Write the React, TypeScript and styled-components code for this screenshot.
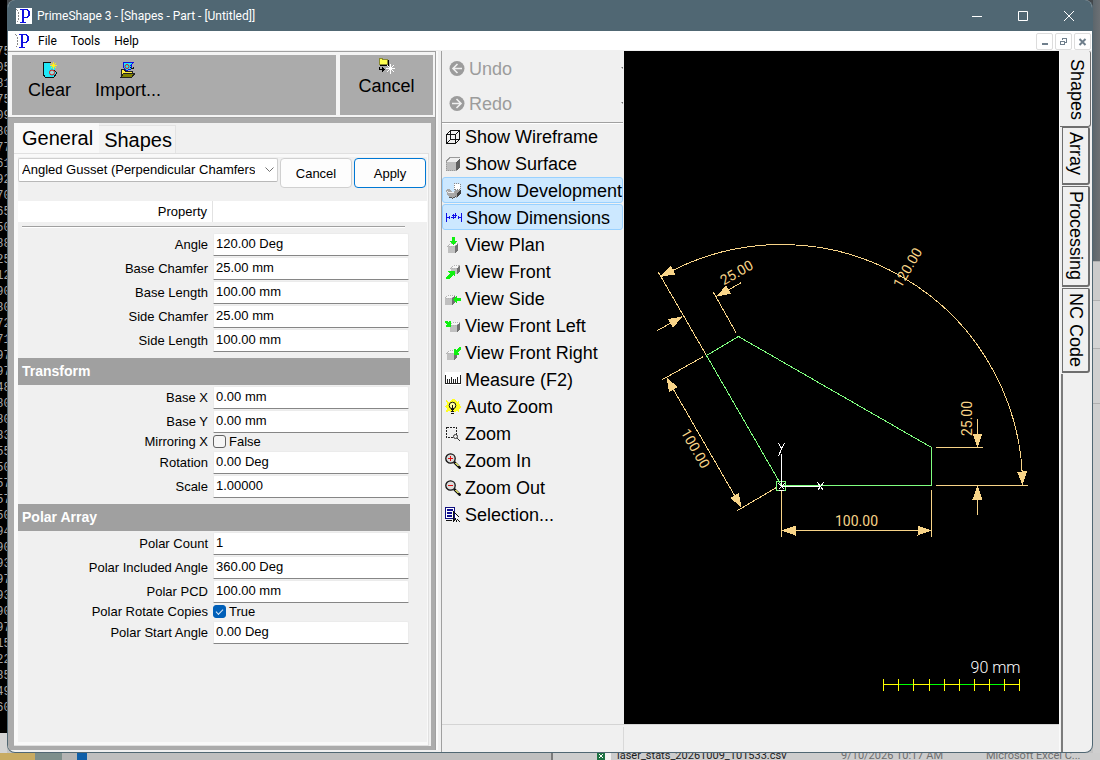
import React from "react";
import styled, { createGlobalStyle, css } from "styled-components";

const Global = createGlobalStyle`
  *, *::before, *::after { box-sizing: border-box; }
  html, body { margin: 0; padding: 0; }
  body { background: #c4c4c4; font-family: "Liberation Sans", Arial, sans-serif; color: #000; }
  button, input, select { font-family: inherit; margin: 0; }
`;

/* ---------- desktop behind the window ---------- */

const Desktop = styled.div`
  display: grid;
  grid-template-columns: 7px minmax(0, 1fr) 7px;
  grid-template-rows: minmax(0, 1fr) 7px;
  min-height: 100vh;
  background: linear-gradient(#43484c 0 60px, #c4c4c4 60px);
`;

const Terminal = styled.div`
  display: flex;
  flex-direction: column;
  align-items: center;
  overflow: hidden;
  padding: 44px 0 17px;
  background: #000;
  border-bottom: 20px solid #d4d4d4;
  color: #a4a4a4;
  font: 12px/16px "Liberation Mono", monospace;
`;

const TerminalLine = styled.span`
  flex: none;
`;

const RightEdge = styled.div`
  display: flex;
  flex-direction: column;
  background: #cfcfcf;
`;

const EdgeBlock = styled.div<{ $h: number; $bg: string }>`
  height: ${(p) => p.$h}px;
  background: ${(p) => p.$bg};
  border-bottom: 1px solid #b0b0b0;
`;

const BottomEdge = styled.div`
  grid-column: 1 / -1;
  display: grid;
  grid-template-columns: 35px 27px 15px 10px 464px 2px minmax(0, 1fr);
  overflow: hidden;
`;

const Swatch = styled.div<{ $bg: string }>`
  background: ${(p) => p.$bg};
`;

const FileRow = styled.div`
  display: grid;
  grid-template-columns: 20px 224px 145px minmax(0, 1fr);
  align-items: center;
  align-content: center;
  height: 7px;
  padding: 0 0 2px 44px;
  overflow: hidden;
  background: #cdcdcd;
  color: #6e6e6e;
  font: 11px/16px Roboto, "Noto Sans", sans-serif;
  white-space: nowrap;
`;

const FileName = styled.span`
  color: #1c1c1c;
`;

/* ---------- window frame ---------- */

const Frame = styled.div`
  display: flex;
  flex-direction: column;
  overflow: hidden;
  border: 1px solid #506773;
  border-top: 0;
  border-radius: 8px;
  background: #f0f0f0;
`;

const TitleBar = styled.header`
  display: flex;
  align-items: center;
  height: 31px;
  padding-left: 8px;
  gap: 5px;
  background: #506773;
  color: #fff;
  font: 12px/16px Roboto, "Noto Sans", sans-serif;
`;

const Title = styled.h1`
  flex: 1;
  margin: 0;
  font: inherit;
`;

const CaptionRow = styled.div`
  display: flex;
`;

const CaptionButton = styled.button`
  display: grid;
  place-items: center;
  width: 46px;
  height: 31px;
  padding: 0;
  border: 0;
  background: none;
  color: #fff;
`;

const MenuBar = styled.nav`
  display: flex;
  align-items: center;
  height: 20px;
  padding: 1px 1px 0 7px;
  background: #fff;
  border-bottom: 1px solid #f0f0f0;
`;

const MenuItem = styled.button`
  height: 18px;
  padding: 0 7px;
  border: 0;
  background: none;
  font: 12px/16px Roboto, "Noto Sans", sans-serif;
`;

const MdiButtons = styled.div`
  display: flex;
  gap: 2px;
  margin-left: auto;
`;

const MdiButton = styled.button`
  display: grid;
  place-items: center;
  width: 17px;
  height: 17px;
  padding: 0;
  border: 1px solid #dcdcdc;
  border-radius: 2px;
  background: #fff;
  color: #6f7f8c;
`;

const Body = styled.div`
  flex: 1;
  display: grid;
  grid-template-columns: 428px minmax(0, 1fr) 33px;
`;

/* ---------- left side: command bar and property pages ---------- */

const LeftPane = styled.section`
  display: flex;
  flex-direction: column;
  margin-bottom: 2px;
  border-top: 1px solid #a0a0a0;
  border-right: 1px solid #a0a0a0;
  background: #ababab;
  box-shadow: 2px 0 0 #fafafa;
`;

const CommandBar = styled.div`
  display: grid;
  grid-template-columns: minmax(0, 1fr) 93px;
  gap: 4px;
  height: 66px;
  padding: 3px 2px 2px 4px;
  background: #f4f4f4;
  border-bottom: 1px solid #a0a0a0;
`;

const CommandGroup = styled.div<{ $center?: boolean }>`
  display: flex;
  gap: 14px;
  align-items: flex-start;
  justify-content: ${(p) => (p.$center ? "center" : "flex-start")};
  padding: ${(p) => (p.$center ? "3px 0 0" : "7px 0 0 11px")};
  background: #ababab;
`;

const Command = styled.button`
  display: flex;
  flex-direction: column;
  align-items: center;
  gap: 2px;
  padding: 0 5px;
  border: 0;
  background: none;
  font-size: 18px;
  line-height: 20px;
`;

const Pages = styled.div`
  flex: 1;
  display: flex;
  flex-direction: column;
  margin: 5px 4px 4px 6px;
  background: #f0f0f0;
`;

const TabStrip = styled.div`
  display: flex;
  align-items: flex-end;
  height: 30px;
`;

const PageTab = styled.button<{ $active?: boolean }>`
  height: ${(p) => (p.$active ? 30 : 28)}px;
  padding: ${(p) => (p.$active ? "0 6px 0 8px" : "0 3px 0 5px")};
  border: 1px solid #e3e3e3;
  border-width: ${(p) => (p.$active ? "0" : "1px 1px 0 0")};
  background: ${(p) => (p.$active ? "#f9f9f9" : "#f3f3f3")};
  font-size: 20px;
  line-height: 24px;
`;

const Page = styled.div`
  flex: 1;
  display: flex;
  margin-right: 2px;
  padding: 3px 1px 3px 4px;
  border: 1px solid #e0e0e0;
  border-left: 0;
  background: #f9f9f9;
`;

const PageInner = styled.div`
  flex: 1;
  min-width: 0;
  background: #f0f0f0;
  font-size: 13px;
`;

const ShapeBar = styled.div`
  display: grid;
  grid-template-columns: minmax(0, 1fr) 72px 72px;
  gap: 2px;
  align-items: start;
  height: 44px;
  padding: 1px 1px 0 0;
`;

const SelectWrap = styled.div`
  position: relative;
  svg { position: absolute; right: 4px; top: 8px; pointer-events: none; }
`;

const ShapeSelect = styled.select`
  display: block;
  width: 100%;
  height: 24px;
  padding: 0 22px 2px 3px;
  appearance: none;
  border: 1px solid #cfcfcf;
  border-bottom-color: #b8b8b8;
  border-radius: 2px;
  background: #fff;
  color: #000;
  font-size: 13px;
`;

const PushButton = styled.button<{ $primary?: boolean }>`
  height: 30px;
  padding: 0;
  border: 1px solid ${(p) => (p.$primary ? "#0078d4" : "#d0d0d0")};
  border-radius: 4px;
  background: #fdfdfd;
  font-size: 13px;
`;

const ColumnHead = styled.div`
  display: grid;
  grid-template-columns: 195px minmax(0, 1fr);
  height: 21px;
  background: #fff;
  line-height: 21px;
  text-align: right;
`;

const ColumnName = styled.div`
  padding-right: 5px;
  border-right: 1px solid #e2e2e2;
`;

const Rule = styled.hr`
  height: 2px;
  margin: 4px 22px 4px 4px;
  border: 0;
  border-top: 1px solid #a0a0a0;
  border-bottom: 1px solid #fff;
`;

const SectionHead = styled.h2`
  height: 27px;
  margin: 6px 17px 0 0;
  padding-left: 4px;
  background: #a0a0a0;
  color: #fff;
  font-size: 14px;
  font-weight: 700;
  line-height: 27px;
`;

const Row = styled.div<{ $compact?: boolean }>`
  display: grid;
  grid-template-columns: 190px minmax(0, 1fr);
  column-gap: 5px;
  align-items: center;
  height: ${(p) => (p.$compact ? 17 : 24)}px;
  padding-right: 18px;
  text-align: right;
`;

const ValueInput = styled.input`
  width: 100%;
  height: 23px;
  margin-top: 1px;
  padding: 0 2px 2px;
  border: 1px solid #ebebeb;
  border-bottom-color: #868686;
  border-radius: 2px 2px 1px 1px;
  background: #fff;
  color: #000;
  font-size: 13px;
`;

const CheckLabel = styled.label`
  display: flex;
  align-items: center;
  gap: 3px;
`;

const Check = styled.input`
  appearance: none;
  display: grid;
  place-items: center;
  width: 13px;
  height: 13px;
  border: 1px solid #626262;
  border-radius: 3px;
  background: #f5f5f5;
  &:checked { background: #005fb8; border-color: #005fb8; }
  &:checked::after {
    content: "";
    width: 7px;
    height: 4px;
    margin-bottom: 2px;
    border: solid #d8e8f8;
    border-width: 0 0 1px 1px;
    transform: rotate(-45deg);
  }
`;

/* ---------- centre: view tools, drawing, status bar ---------- */

const Centre = styled.section`
  display: grid;
  grid-template-columns: 182px minmax(0, 1fr);
  grid-template-rows: minmax(0, 1fr) 28px;
  margin-left: 5px;
  border-left: 1px solid #a0a0a0;
`;

const ToolColumn = styled.div`
  display: flex;
  flex-direction: column;
  overflow: hidden;
  margin-right: 1px;
`;

const History = styled.div`
  display: flex;
  flex-direction: column;
  padding-bottom: 1px;
  border-bottom: 1px solid #a0a0a0;
  box-shadow: 0 1px 0 #fff;
`;

const toolText = css`
  border: 0;
  background: none;
  font-size: 18px;
  line-height: 20px;
  text-align: left;
  white-space: nowrap;
`;

const HistoryButton = styled.button`
  ${toolText}
  display: flex;
  align-items: center;
  gap: 4px;
  height: 35px;
  padding: 0 0 0 7px;
  &:disabled { color: #9c9c9c; }
  &::after {
    content: "";
    margin-left: auto;
    border: 2px solid transparent;
    border-top-color: #707070;
    border-right-width: 0;
  }
`;

const Tool = styled.button<{ $on?: boolean }>`
  ${toolText}
  display: flex;
  align-items: center;
  gap: 4px;
  height: 27px;
  padding: 0 0 0 3px;
  ${(p) =>
    p.$on &&
    css`
      height: 26px;
      margin-bottom: 1px;
      padding-top: 2px;
      background: #cce8ff;
      border: 1px solid #99d1ff;
      border-radius: 3px;
    `}
`;

const Canvas = styled.div`
  background: #000;
  min-width: 0;
  svg { display: block; width: 100%; height: 100%; }
  text { font-family: Roboto, "Liberation Sans", sans-serif; }
`;

const StatusBar = styled.footer`
  grid-column: 1 / -1;
  display: grid;
  grid-template-columns: 182px minmax(0, 1fr);
  border-top: 1px solid #d4d4d4;
`;

const StatusCell = styled.div`
  border-right: 1px solid #d9d9d9;
  margin: 2px 0 1px;
  &:last-child { border-right: 0; }
`;

/* ---------- right side tabs ---------- */

const SideTabs = styled.div`
  display: flex;
  flex-direction: column;
  border-left: 1px solid #fafafa;
`;

const SideTab = styled.button<{ $active?: boolean; $h: number }>`
  writing-mode: vertical-rl;
  height: ${(p) => p.$h}px;
  margin: ${(p) => (p.$active ? "0 1px 0 0" : "0 2px 1px 2px")};
  padding: ${(p) => (p.$active ? "8px 0 0 4px" : "4px 0 0")};
  border: solid #6e6e6e;
  border-width: ${(p) => (p.$active ? "0 1px 1px 0" : "1px 2px 2px 1px")};
  border-radius: 0 2px 3px 0;
  background: #f0f0f0;
  font-size: 18px;
  line-height: 22px;
  text-align: start;
`;

const SideFill = styled.div`
  flex: 1;
  margin-left: 1px;
  border-left: 2px solid #7c7c7c;
`;

/* ---------- icons ---------- */

const Icon = ({ children }: { children: React.ReactNode }) => (
  <svg width="16" height="16" viewBox="0 0 16 16" fill="none" shapeRendering="crispEdges" aria-hidden="true">
    {children}
  </svg>
);

const AppLogo = ({ boxed }: { boxed?: boolean }) => (
  <svg width="16" height="16" viewBox="0 0 16 16" aria-hidden="true" fill="none" shapeRendering="crispEdges">
    {boxed && <path fill="#fff" d="M0 0h16v16H0z" />}
    <path d="M.5 1.500l2 3v7l-2 3" stroke="#888" strokeDasharray="2 1" />
    <path
      fill="#1010e0"
      fillRule="evenodd"
      d="M4 1h8v1h1v1h1v5h-1v1h-1v1H8v4h2v1H4v-1h2V2H4zM8 2v7h3V8h1V3h-1V2z"
    />
  </svg>
);

const ClearIcon = () => (
  <Icon>
    <path d="M1.500.5h6v3h5v5l2.500 2.500-3 4h-8l-2.500-2z" fill="#20e8f8" />
    <path d="M1 .5h8M1.500 0v13l2 2.500h8l3.500-4.500-3-3" stroke="#111" />
    <path d="M11.500 0v7M8 3.500h7M9 1l5 5M14 1L9 6" stroke="#ffee20" />
    <circle cx="10" cy="10.500" r="2.500" fill="#9fd8d8" stroke="#e01010" shapeRendering="auto" />
  </Icon>
);

const ImportIcon = () => (
  <Icon>
    <path d="M3 .5h10l-2 3 1 3-5 2-4-3z" fill="#20e8f8" stroke="#1010e0" />
    <circle cx="7" cy="4.500" r="2" stroke="#e01010" shapeRendering="auto" />
    <path d="M1.500 15V7.500h3l1 2h7V11" fill="#ffee40" stroke="#222" />
    <path d="M1 15l3-4h11l-3 4z" fill="#808000" stroke="#222" />
    <path d="M11 6.500h3M13.500 7V4.500M10 5l2 2" stroke="#111" />
  </Icon>
);

const CancelIcon = () => (
  <Icon>
    <path d="M.5.500h3v1h5v5h-8z" fill="#ffff50" stroke="#8a8a30" />
    <path d="M9 1.500v6H1" stroke="#000" />
    <path d="M.5 9v2.500h3" stroke="#000" />
    <path d="M3 9l3 2.500L3 14z" fill="#000" />
    <path d="M11.500 6v10M7 10.500h9M8 7l7 7M15 7l-7 7" stroke="#fff" />
  </Icon>
);

const HistoryIcon = ({ dir }: { dir: "left" | "right" }) => (
  <svg width="16" height="16" viewBox="0 0 16 16" aria-hidden="true" fill="none">
    <circle cx="8" cy="7.500" r="7.500" fill="#9c9c9c" />
    <path
      d={dir === "left" ? "M13 7.500H4M8.500 3L4 7.500l4.500 4.500" : "M3 7.500h9M7.500 3L12 7.500 7.500 12"}
      stroke="#f0f0f0"
      strokeWidth="1.600"
    />
  </svg>
);

const Cube = ({ x = 0, y = 0, s = 9 }: { x?: number; y?: number; s?: number }) => (
  <g transform={`translate(${x} ${y})`}>
    <path d={`M0 3h${s - 3}v${s - 3}H0z`} fill="#c0c0c0" />
    <path d={`M0 3l3-3h${s - 3}l-3 3z`} fill="#f6f6f6" stroke="#b4b4b4" strokeDasharray="1 1" />
    <path d={`M${s - 3} 3l3-3v${s - 3}l-3 3z`} fill="#707070" />
  </g>
);

const WireframeIcon = () => (
  <Icon>
    <path d="M1.500 5.500h9v9h-9zM5.500 1.500h9v9l-4 4M1.500 5.500l4-4M10.500 5.500l4-4M5.500 1.500v9h9M1.500 14.500l4-4" stroke="#111" />
  </Icon>
);

const SurfaceIcon = () => (
  <Icon>
    <path d="M1 6h10v9H1z" fill="#bdbdbd" />
    <path d="M1 6l4-4h10l-4 4z" fill="#efefef" />
    <path d="M4 1.500h11M1 5.500l4-4" stroke="#999" />
    <path d="M11 6l4-4v9l-4 4z" fill="#606060" />
    <path d="M1.500 6v8.500h10" stroke="#999" strokeDasharray="1 1" />
  </Icon>
);

const DevelopmentIcon = () => (
  <Icon>
    <path d="M8.500.5h6v6h-6z" fill="#fff" stroke="#888" strokeDasharray="1 1" />
    <path d="M9 7h6v4l-4 4-2-1z" fill="#a0a0a0" />
    <path d="M15 7v4l-4 4v-5z" fill="#404040" />
    <path d="M0 7l3-1 4 3 2-1v6l-3 1-4-2z" fill="#a8a8a8" />
    <path d="M1 8l3 2h4" stroke="#eee" />
    <path d="M3 14l4 1.500L10 13" stroke="#555" />
  </Icon>
);

const DimensionsIcon = () => (
  <Icon>
    <path d="M.5 3v9M15.500 3v9M1 7.500h3M12 7.500h3M3.500 6v3M12.500 6v3M6 5.500h5M5 7.500h5M7.500 4v5M9.500 3v5" stroke="#1010e8" />
  </Icon>
);

const green = "#10f010";

const PlanIcon = () => (
  <Icon>
    <Cube x={3} y={6} s={10} />
    <path d="M7 0h3v4h2l-3.500 4L5 4h2z" fill={green} />
  </Icon>
);

const FrontIcon = () => (
  <Icon>
    <Cube x={6} y={1} s={9} />
    <path d="M3 7h7v5l-2-1-4 4H1v-2l4-3z" fill={green} />
  </Icon>
);

const SideIcon = () => (
  <Icon>
    <Cube x={0} y={4} s={10} />
    <path d="M8 8l4-4v3h4v3h-4v3z" fill={green} />
  </Icon>
);

const FrontLeftIcon = () => (
  <Icon>
    <Cube x={5} y={4} s={10} />
    <path d="M0 3h2l2 2V3h2v6H1V7h1L0 5z" fill={green} />
  </Icon>
);

const FrontRightIcon = () => (
  <Icon>
    <Cube x={2} y={5} s={10} />
    <path d="M16 2h-2l-3 3V4H9v6h5V8h-1l3-4z" fill={green} />
  </Icon>
);

const MeasureIcon = () => (
  <Icon>
    <path fill="#fff" d="M0 0h16v13H0z" />
    <path d="M.5 3v9M2.500 7v5M4.500 7v5M6.500 5v7M8.500 7v5M10.500 7v5M12.500 5v7M15.500 3v9M0 11.500h16" stroke="#222" />
  </Icon>
);

const BulbIcon = () => (
  <Icon>
    <path d="M1 1l3 2 3-3h2l3 3 2-2v3l2 4-2 2v3l-3-1-1 1H5l-1-1-3 1 1-3-2-2 2-3z" fill="#ffff20" />
    <circle cx="7.500" cy="6.500" r="3.300" fill="#ffffa0" stroke="#111" shapeRendering="auto" />
    <path d="M7.500 6v6M6 10.500h3M6 12.500h3M6 14.500h3" stroke="#111" />
  </Icon>
);

const ZoomIcon = () => (
  <Icon>
    <path d="M1.500 1.500h10v10h-10z" stroke="#222" strokeDasharray="2 1" />
    <circle cx="10.500" cy="10.500" r="2" fill="#eee" stroke="#333" shapeRendering="auto" />
    <path d="M12 12l3 3" stroke="#333" />
  </Icon>
);

const MagnifierIcon = ({ plus }: { plus?: boolean }) => (
  <Icon>
    <circle cx="5.500" cy="5.500" r="4.700" fill="#dcdcdc" stroke="#111" strokeWidth="1.300" shapeRendering="auto" />
    <path d="M9 9l6.500 6.500" stroke="#111" strokeWidth="2.500" shapeRendering="auto" />
    <path d="M10.500 10l3 3" stroke="#c8c860" />
    <path d={plus ? "M3 5.500h5M5.500 3v5" : "M3 5.500h5"} stroke="#e01010" />
  </Icon>
);

const SelectionIcon = () => (
  <Icon>
    <path d="M.5.500h9v11h-9z" fill="#fff" stroke="#101080" />
    <path d="M2 3h6M2 6h5M2 9h5" stroke="#101090" strokeWidth="2" />
    <path d="M8.500 4v10l2-2.500L12 15M9 5l5 5" stroke="#111" />
    <path d="M10 7v4h3z" fill="#fff" />
    <path d="M12 12l3 3M1 13.500h6" stroke="#111" />
  </Icon>
);

/* ---------- part drawing, seen from the shape's own origin ---------- */

const dim = "#f8d488";

const Arrow = ({ x, y, a }: { x: number; y: number; a: number }) => (
  <path d="M0 0L-14 -5V5z" fill={dim} transform={`translate(${x} ${y}) rotate(${a})`} />
);

const DimText = ({ x, y, a, children }: { x: number; y: number; a: number; children: string }) => (
  <text fill={dim} fontSize="14" textAnchor="middle" transform={`translate(${x} ${y}) rotate(${a})`} dy="5">
    {children}
  </text>
);

const ticks = [102, 117, 132, 148, 163, 178, 193, 208, 223, 238];

const Drawing = () => (
  <svg
    viewBox="-157.5 -434.5 435 673"
    fill="none"
    shapeRendering="crispEdges"
    role="img"
    aria-label="Angled gusset with dimensions"
  >
    <g stroke={dim}>
      <path d="M0 4V51M150 4V51M0 45H150" />
      <path d="M154 -38H201M154 0H246M196 -67V-38M196 0V29" />
      <path d="M241 0A241 241 0 0 0 -120.500 -208.700" />
      <path d="M-75 -130L-123 -213" />
      <path d="M-45 -152L-68 -193M-65 -189L-40 -203M-99 -169L-124 -155" />
      <path d="M-78 -129L-119 -106M-5 2L-44 25M-115 -108L-40 22" />
    </g>
    <Arrow x={0} y={45} a={180} />
    <Arrow x={150} y={45} a={0} />
    <Arrow x={196} y={-38} a={90} />
    <Arrow x={196} y={0} a={-90} />
    <Arrow x={241} y={0} a={88} />
    <Arrow x={-121} y={-209} a={153} />
    <Arrow x={-65} y={-189} a={150} />
    <Arrow x={-99} y={-169} a={-30} />
    <Arrow x={-115} y={-108} a={-120} />
    <Arrow x={-40} y={22} a={60} />
    <DimText x={75} y={35} a={0}>100.00</DimText>
    <DimText x={185} y={-67} a={-90}>25.00</DimText>
    <DimText x={126} y={-218} a={-60}>120.00</DimText>
    <DimText x={-45} y={-213} a={-30}>25.00</DimText>
    <DimText x={-86} y={-37} a={60}>100.00</DimText>
    <path d="M0 0H150V-38L-43 -149L-75 -130Z" stroke="#80ff80" />
    <path d="M-5 -4H4V5H-5Z" stroke="#80ff80" />
    <path d="M0 0V-32M0 1H38M-3 -2L3 4M3 -2L-3 4M-3 5H2" stroke="#fff" />
    <path d="M36 -3L42 5M42 -3L36 5M-3 -42L0 -37L3 -42M0 -37L-3 -29" stroke="#fff" />
    <text x="189" y="187" fontSize="16" fontWeight="300" fill="#fff">90 mm</text>
    <path d="M102 199H238" stroke="#ffff00" />
    <path d="M117 199H132M148 199H163M178 199H193M208 199H223" stroke="#00ff00" />
    <path d={ticks.map((t) => `M${t} 193V205`).join("")} stroke="#ffff00" />
  </svg>
);

/* ---------- data ---------- */

const consoleLines =
  "75 05 81 75 09 80 77 61 92 70 65 50 88 25 12 90 80 72 71 97 97 48 80 80 83 55 50 57 57 50 94 90 93 97 93 90 97 15 22 85 49 60".split(" ");

type Field = { label: string; value: string | boolean };

const dimensions: Field[] = [
  { label: "Angle", value: "120.00 Deg" },
  { label: "Base Chamfer", value: "25.00 mm" },
  { label: "Base Length", value: "100.00 mm" },
  { label: "Side Chamfer", value: "25.00 mm" },
  { label: "Side Length", value: "100.00 mm" },
];

const transform: Field[] = [
  { label: "Base X", value: "0.00 mm" },
  { label: "Base Y", value: "0.00 mm" },
  { label: "Mirroring X", value: false },
  { label: "Rotation", value: "0.00 Deg" },
  { label: "Scale", value: "1.00000" },
];

const polar: Field[] = [
  { label: "Polar Count", value: "1" },
  { label: "Polar Included Angle", value: "360.00 Deg" },
  { label: "Polar PCD", value: "100.00 mm" },
  { label: "Polar Rotate Copies", value: true },
  { label: "Polar Start Angle", value: "0.00 Deg" },
];

const tools: { name: string; icon: React.ReactNode; on?: boolean }[] = [
  { name: "Show Wireframe", icon: <WireframeIcon /> },
  { name: "Show Surface", icon: <SurfaceIcon /> },
  { name: "Show Development", icon: <DevelopmentIcon />, on: true },
  { name: "Show Dimensions", icon: <DimensionsIcon />, on: true },
  { name: "View Plan", icon: <PlanIcon /> },
  { name: "View Front", icon: <FrontIcon /> },
  { name: "View Side", icon: <SideIcon /> },
  { name: "View Front Left", icon: <FrontLeftIcon /> },
  { name: "View Front Right", icon: <FrontRightIcon /> },
  { name: "Measure (F2)", icon: <MeasureIcon /> },
  { name: "Auto Zoom", icon: <BulbIcon /> },
  { name: "Zoom", icon: <ZoomIcon /> },
  { name: "Zoom In", icon: <MagnifierIcon plus /> },
  { name: "Zoom Out", icon: <MagnifierIcon /> },
  { name: "Selection...", icon: <SelectionIcon /> },
];

const FieldRow = ({ label, value }: Field) => {
  const id = label.toLowerCase().replace(/ /g, "-");
  if (typeof value === "boolean") {
    return (
      <Row $compact>
        <label htmlFor={id}>{label}</label>
        <CheckLabel>
          <Check id={id} type="checkbox" defaultChecked={value} />
          {value ? "True" : "False"}
        </CheckLabel>
      </Row>
    );
  }
  return (
    <Row>
      <label htmlFor={id}>{label}</label>
      <ValueInput id={id} type="text" defaultValue={value} />
    </Row>
  );
};

export default function App() {
  return (
    <>
      <Global />
      <Desktop>
        <Terminal>
          {consoleLines.map((l, i) => (
            <TerminalLine key={i}>{l}</TerminalLine>
          ))}
        </Terminal>

        <Frame>
          <TitleBar>
            <AppLogo boxed />
            <Title>PrimeShape 3 - [Shapes - Part - [Untitled]]</Title>
            <CaptionRow>
              <CaptionButton aria-label="Minimize">
                <svg width="10" height="10" viewBox="0 0 10 10" stroke="currentColor"><path d="M0 5.500h10" /></svg>
              </CaptionButton>
              <CaptionButton aria-label="Maximize">
                <svg width="10" height="10" viewBox="0 0 10 10" fill="none" stroke="currentColor"><path d="M.5.5h9v9h-9z" /></svg>
              </CaptionButton>
              <CaptionButton aria-label="Close">
                <svg width="10" height="10" viewBox="0 0 10 10" stroke="currentColor"><path d="M0 0l10 10M10 0L0 10" /></svg>
              </CaptionButton>
            </CaptionRow>
          </TitleBar>

          <MenuBar>
            <AppLogo />
            <MenuItem>File</MenuItem>
            <MenuItem>Tools</MenuItem>
            <MenuItem>Help</MenuItem>
            <MdiButtons>
              <MdiButton aria-label="Minimize document">
                <svg width="9" height="9" viewBox="0 0 9 9" stroke="currentColor" strokeWidth="2"><path d="M2 7h6" /></svg>
              </MdiButton>
              <MdiButton aria-label="Restore document">
                <svg width="9" height="9" viewBox="0 0 9 9" fill="none" stroke="currentColor" shapeRendering="crispEdges">
                  <path d="M1.500 4.500h4v3h-4zM1 4h5M3.500 3V1.500h4v4H6M3 1h5" />
                </svg>
              </MdiButton>
              <MdiButton aria-label="Close document">
                <svg width="9" height="9" viewBox="0 0 9 9" stroke="currentColor" strokeWidth="2"><path d="M1.500 2l6 6M7.500 2l-6 6" /></svg>
              </MdiButton>
            </MdiButtons>
          </MenuBar>

          <Body>
            <LeftPane>
              <CommandBar>
                <CommandGroup>
                  <Command><ClearIcon />Clear</Command>
                  <Command><ImportIcon />Import...</Command>
                </CommandGroup>
                <CommandGroup $center>
                  <Command><CancelIcon />Cancel</Command>
                </CommandGroup>
              </CommandBar>

              <Pages>
                <TabStrip role="tablist">
                  <PageTab role="tab" aria-selected $active>General</PageTab>
                  <PageTab role="tab">Shapes</PageTab>
                </TabStrip>
                <Page>
                  <PageInner>
                    <ShapeBar>
                      <SelectWrap>
                        <ShapeSelect aria-label="Shape">
                          <option>Angled Gusset (Perpendicular Chamfers)</option>
                        </ShapeSelect>
                        <svg width="9" height="7" viewBox="0 0 9 7" fill="none" stroke="#707070"><path d="M.5 1.500l4 4 4-4" /></svg>
                      </SelectWrap>
                      <PushButton>Cancel</PushButton>
                      <PushButton $primary>Apply</PushButton>
                    </ShapeBar>
                    <ColumnHead>
                      <ColumnName>Property</ColumnName>
                    </ColumnHead>
                    <Rule />
                    {dimensions.map((f) => <FieldRow key={f.label} {...f} />)}
                    <SectionHead>Transform</SectionHead>
                    {transform.map((f) => <FieldRow key={f.label} {...f} />)}
                    <SectionHead>Polar Array</SectionHead>
                    {polar.map((f) => <FieldRow key={f.label} {...f} />)}
                  </PageInner>
                </Page>
              </Pages>
            </LeftPane>

            <Centre>
              <ToolColumn>
                <History>
                  <HistoryButton disabled><HistoryIcon dir="left" />Undo</HistoryButton>
                  <HistoryButton disabled><HistoryIcon dir="right" />Redo</HistoryButton>
                </History>
                {tools.map((t) => (
                  <Tool key={t.name} $on={t.on} aria-pressed={!!t.on}>
                    {t.icon}
                    {t.name}
                  </Tool>
                ))}
              </ToolColumn>
              <Canvas><Drawing /></Canvas>
              <StatusBar>
                <StatusCell />
                <StatusCell />
              </StatusBar>
            </Centre>

            <SideTabs>
              <SideTab $active $h={76}>Shapes</SideTab>
              <SideTab $h={58}>Array</SideTab>
              <SideTab $h={101}>Processing</SideTab>
              <SideTab $h={85}>NC Code</SideTab>
              <SideFill />
            </SideTabs>
          </Body>
        </Frame>

        <RightEdge>
          <EdgeBlock $h={262} $bg="linear-gradient(90deg, #5c666c, #6c7074)" />
          <EdgeBlock $h={39} $bg="#cbcbcb" />
          <EdgeBlock $h={48} $bg="#d4d4d4" />
          <EdgeBlock $h={55} $bg="#d0d0d0" />
        </RightEdge>

        <BottomEdge>
          <Swatch $bg="#c8ab62" />
          <Swatch $bg="#7d8f8c" />
          <Swatch $bg="#b4b4b4" />
          <Swatch $bg="#0f5fa8" />
          <Swatch $bg="#bfbfbf" />
          <Swatch $bg="#7a7a7a" />
          <FileRow>
            <svg width="14" height="14" viewBox="0 0 14 14" aria-hidden="true">
              <path fill="#f2f2f2" d="M5 0h9v14H5z" />
              <path fill="#1f7244" d="M0 3h8v8H0z" />
              <path stroke="#fff" d="M2 5l4 4M6 5L2 9" />
            </svg>
            <FileName>laser_stats_20261009_101533.csv</FileName>
            <span>9/10/2026 10:17 AM</span>
            <span>Microsoft Excel C...</span>
          </FileRow>
        </BottomEdge>
      </Desktop>
    </>
  );
}
